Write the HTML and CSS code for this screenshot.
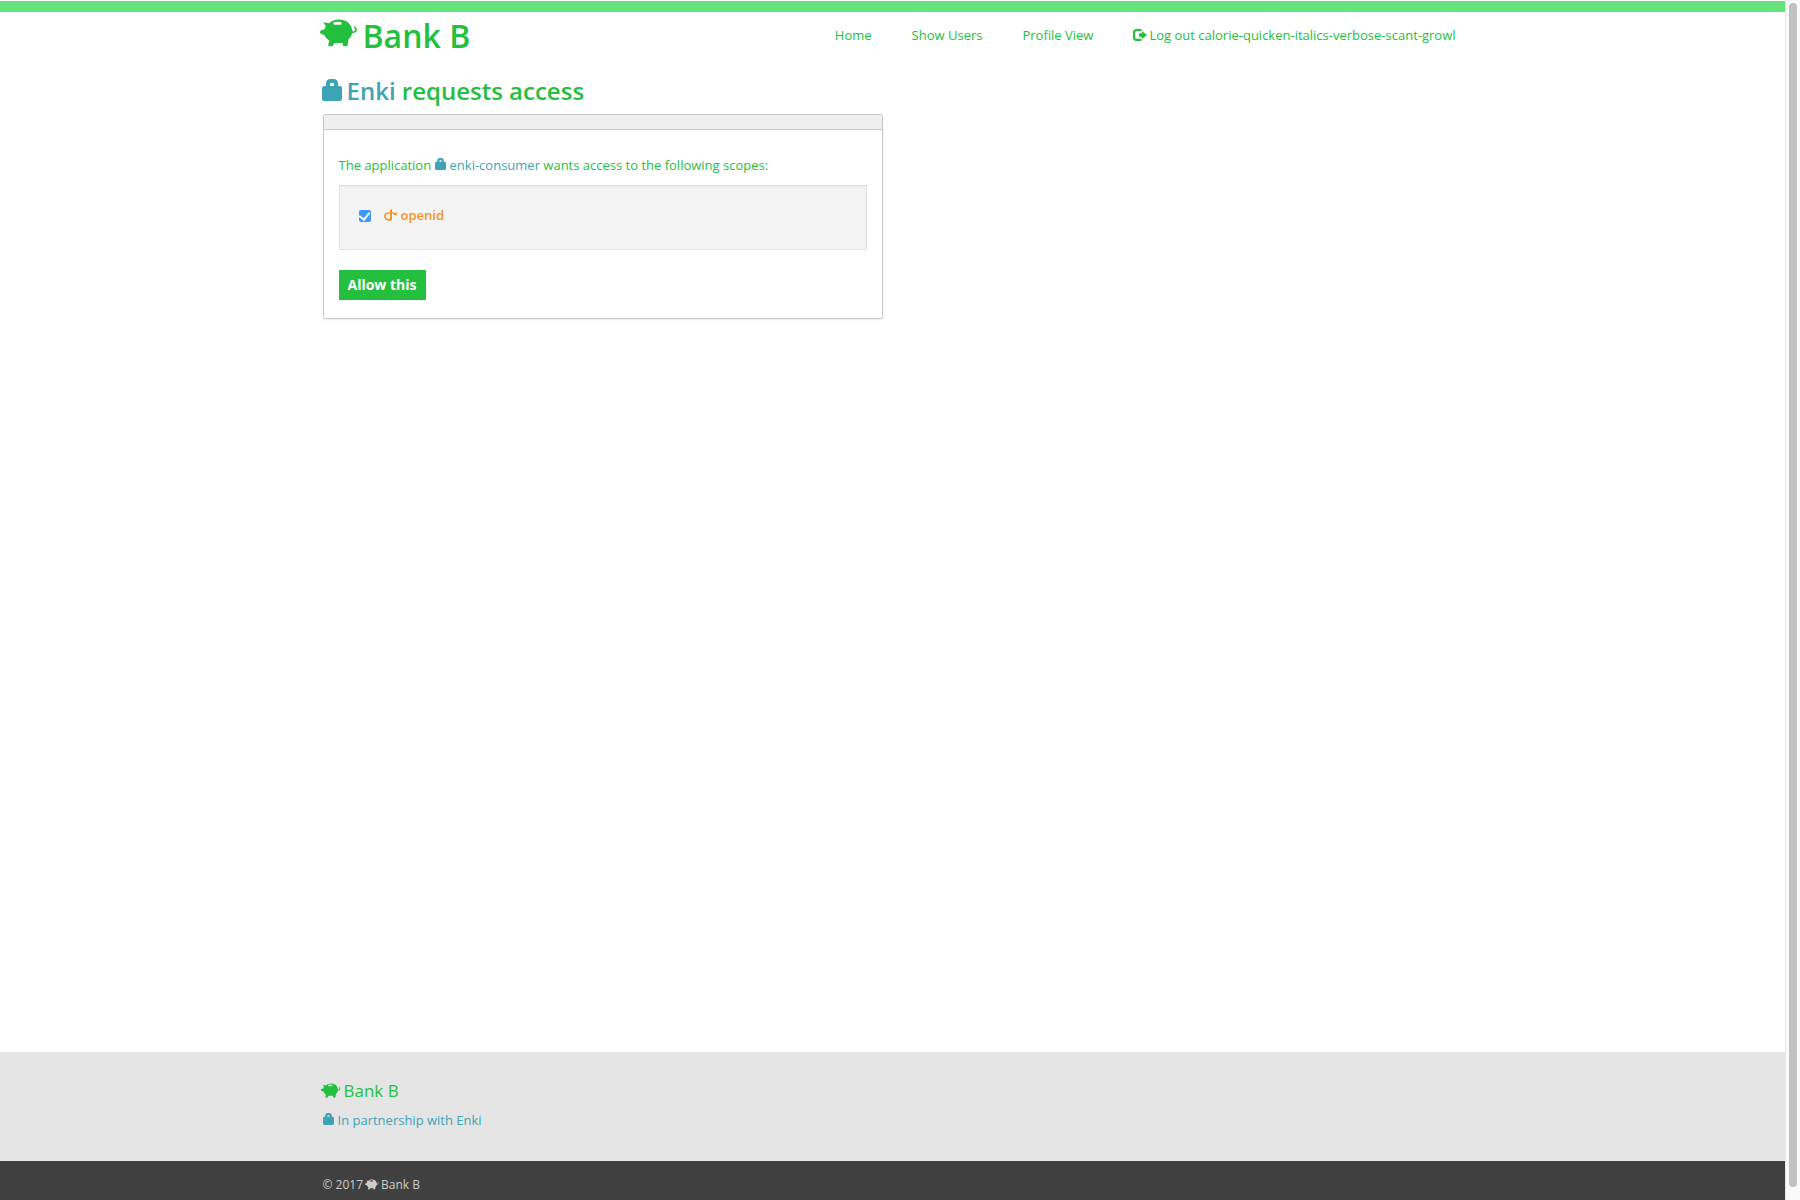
FILE: index.html
```html
<!DOCTYPE html>
<html lang="en">
<head>
<meta charset="utf-8">
<title>Bank B</title>
<link rel="stylesheet" href="styles.css">
</head>
<body>
<svg class="sprite" aria-hidden="true">
  <symbol id="piggy" viewBox="0 0 38 28">
    <path fill="currentColor" fill-rule="evenodd" d="M3.200 3.200L9 4.300C11.500 1.900 15 .5 19 .5C26 .5 31.200 4.500 32 10.500C32.200 12 32.600 12.600 33.500 12.400C34.800 12 35.400 11.200 35 10.300C34 9.300 33.900 7.600 35.100 6.900L35.800 7.600C35 8.500 36.700 9.200 36.900 10.600C37.100 12.700 35.200 14.100 32.200 14C31.500 17 30.200 18.800 28.500 20.200L27.600 26.300Q27.400 27.300 26.400 27.300H24Q23 27.300 22.900 26.300L22.700 24H14L13.300 26.300Q13 27.300 12 27.300H9.200Q8 27.300 8.300 26L9.200 21.500C7 20.300 5.300 18.200 4.300 16.100L1.200 15Q0 14.500 0 13.300Q0 11.700 1.300 11.300L4.500 10.200C4.800 9 5.200 8 5.800 7.100ZM14 3.200Q13.200 3.400 13.400 4.200L13.900 5.800H21.500V3Q17.500 2.300 14 3.200Z"/>
  </symbol>
  <symbol id="bag" viewBox="0 0 20 22">
    <path fill="currentColor" fill-rule="evenodd" d="M4 7V4.500Q4 0 8.500 0H11.500Q16 0 16 4.500V7H17.500Q20 7 20 9.500V19.500Q20 22 17.500 22H2.500Q0 22 0 19.500V9.500Q0 7 2.500 7ZM8 7H12V5Q12 4 11 4H9Q8 4 8 5Z"/>
  </symbol>
  <symbol id="logout" viewBox="0 0 14 12">
    <path fill="none" stroke="currentColor" stroke-width="2.200" d="M8.500 1.100H3.500Q1.100 1.100 1.100 3.500V8.500Q1.100 10.900 3.500 10.900H8.500"/>
    <path fill="currentColor" d="M6 4.300H9V1.900L14 6L9 10.100V7.700H6Z"/>
  </symbol>
  <symbol id="openid" viewBox="0 0 13 12">
    <path fill="none" stroke="currentColor" stroke-width="1.600" d="M5.800 3.800C2.600 4 .9 5.500 .9 7.400C.9 9.300 2.800 10.700 6 10.900"/>
    <path fill="currentColor" d="M6 .9L8 0V11L6 12ZM8 3.100C9.200 3.300 10.200 3.600 11 4.100L12.500 3.200L13 6.200L8.800 5.400L9.900 4.800L8 4.500Z"/>
  </symbol>
</svg>
<div class="scrollbar" aria-hidden="true"><div class="thumb"></div></div>
<div class="page">
  <header class="header">
    <div class="container header-row">
      <a class="brand" href="#"><svg class="brand-icon"><use href="#piggy"/></svg>Bank B</a>
      <nav class="nav">
        <a href="#">Home</a>
        <a href="#">Show Users</a>
        <a href="#">Profile View</a>
        <a class="logout" href="#"><svg class="logout-icon"><use href="#logout"/></svg>Log out calorie-quicken-italics-verbose-scant-growl</a>
      </nav>
    </div>
  </header>
  <main class="container main">
    <h1 class="title"><svg class="title-icon partner"><use href="#bag"/></svg><span><span class="partner">Enki</span> requests access</span></h1>
    <section class="panel">
      <div class="panel-heading"></div>
      <form class="panel-body">
        <p class="intro">The application <a class="partner" href="#"><svg class="bag-icon"><use href="#bag"/></svg>enki-consumer</a> wants access to the following scopes:</p>
        <div class="scopes">
          <input class="check" type="checkbox" id="scope-openid" checked>
          <label class="scope" for="scope-openid"><svg class="openid-icon"><use href="#openid"/></svg>openid</label>
        </div>
        <button class="button" type="button">Allow this</button>
      </form>
    </section>
  </main>
  <footer>
    <div class="footer">
      <div class="container">
        <a class="footer-brand" href="#"><svg class="footer-piggy"><use href="#piggy"/></svg>Bank B</a>
        <a class="footer-partner partner" href="#"><svg class="bag-icon"><use href="#bag"/></svg>In partnership with Enki</a>
      </div>
    </div>
    <div class="legal">
      <div class="container legal-row">© 2017 <svg class="legal-piggy"><use href="#piggy"/></svg> Bank B</div>
    </div>
  </footer>
</div>
</body>
</html>
```
FILE: styles.css
```css
* { box-sizing: border-box; }
body {
  margin: 0;
  padding-right: 15px;
  background: #fff;
  color: #24bf3e;
  font: 13px/20px "Open Sans", sans-serif;
}
a { color: inherit; text-decoration: none; }
.sprite { position: absolute; width: 0; height: 0; }
.page { display: flex; flex-direction: column; min-height: 100vh; padding-top: 1px; }
.container { width: 100%; max-width: 1140px; margin: 0 auto; }

.scrollbar {
  position: fixed;
  top: 0;
  right: 0;
  bottom: 0;
  width: 15px;
  padding: 3px 3px 13px;
  background: #fafafa;
  border-left: 1px solid #e7e7e7;
}
.thumb { height: 100%; border-radius: 4px; background: #c1c1c1; }

.header { border-top: 11px solid #66e37d; }
.header-row { display: flex; justify-content: space-between; padding-right: 7px; }
.brand {
  display: flex;
  gap: 5px;
  margin-left: -3px;
  padding-top: 2px;
  font-size: 32px;
  line-height: 44px;
  font-weight: 600;
}
.brand-icon { width: 38px; height: 28px; margin-top: 5px; }
.nav { display: flex; gap: 40px; padding-top: 13px; }
.logout { display: flex; gap: 2px; }
.logout-icon { width: 14px; height: 12px; margin-top: 4px; }

.main { flex: 1; }
.title {
  display: flex;
  gap: 5px;
  margin: 15px 0 5px -1px;
  font-size: 24px;
  line-height: 36px;
  font-weight: 600;
}
.title-icon { width: 20px; height: 22px; margin-top: 6px; }
.partner { color: #3ca4b5; }
.panel {
  width: 50%;
  max-width: 560px;
  min-width: 560px;
  border: 1px solid #c8c8c8;
  border-radius: 2px;
  box-shadow: 0 1px 2px rgba(0, 0, 0, 0.08);
}
@media (max-width: 620px) {
  .panel { width: 100%; min-width: 0; }
}
.panel-heading { height: 15px; background: #f0f0f0; border-bottom: 1px solid #c8c8c8; }
.panel-body { padding: 25px 15px 18px; }
.intro { margin: 0 0 10px; }
.bag-icon { width: 11px; height: 12px; margin-right: 4px; }
.scopes {
  display: flex;
  gap: 13px;
  height: 65px;
  margin-bottom: 20px;
  padding: 19px;
  background: #f4f4f4;
  border: 1px solid #e1e1e1;
  box-shadow: inset 0 1px 1px rgba(0, 0, 0, 0.05);
}
.check {
  appearance: none;
  display: grid;
  place-items: center;
  width: 12px;
  height: 12px;
  margin: 5px 0 0;
  border-radius: 2px;
  background: #3b99fc;
}
.check:checked::after {
  content: "";
  width: 5px;
  height: 8px;
  margin-bottom: 2px;
  border: solid #fff;
  border-width: 0 2px 2px 0;
  transform: rotate(38deg);
}
.scope { display: flex; gap: 4px; color: #f7931e; font-weight: 600; }
.openid-icon { width: 13px; height: 12px; margin-top: 4px; }
.button {
  display: block;
  height: 30px;
  padding: 0 9px;
  border: 0;
  background: #24bf3e;
  color: #fff;
  font: 700 14px/30px "Open Sans", sans-serif;
}

.footer { padding: 25px 0 31px; background: #e5e5e5; }
.footer-brand, .footer-partner { display: flex; width: max-content; }
.footer-brand { gap: 3px; margin: 0 0 5px -2px; font-size: 17px; line-height: 28px; }
.footer-piggy { width: 20px; height: 15px; margin-top: 6px; }
.footer-partner .bag-icon { margin-top: 3px; }
.legal { height: 39px; padding-top: 14px; background: #404040; color: #ccc; font-size: 12px; }
.legal-row { display: flex; gap: 2px; }
.legal-piggy { width: 14px; height: 11px; margin-top: 4px; }
```
